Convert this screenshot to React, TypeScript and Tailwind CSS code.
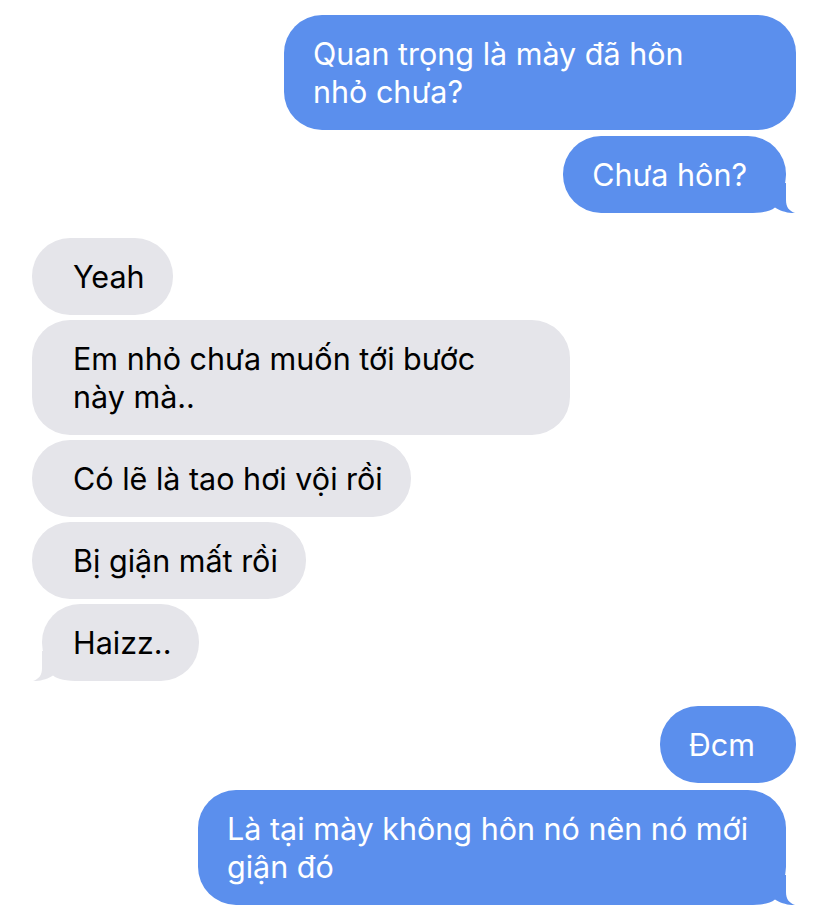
import React from "react";

const BLUE = "bg-[#5b8fed]";
const GRAY = "bg-[#e5e5ea]";

function Tail({ side, color }: { side: "left" | "right"; color: string }) {
  return (
    <svg
      width="48"
      height="30"
      viewBox="0 0 48 30"
      className={
        side === "right"
          ? "absolute bottom-0 right-[-10px]"
          : "absolute bottom-0 left-[-10px] -scale-x-100"
      }
    >
      <path d="M0 0 H38 V17 C38 24 41 28 47 30 C41 30.5 32 28 27 24.5 C22 28.5 14 30 0 30 Z" fill={color} />
    </svg>
  );
}

function Sent({ lines, tail, width }: { lines: string[]; tail?: boolean; width?: string }) {
  return (
    <div
      className={`relative ${BLUE} text-white rounded-[38px] py-[19.5px] pl-[29px] ${tail ? "mr-[10px] pr-[39px]" : "pr-[41px]"} ${width ?? ""}`}
    >
      {lines.map((l, i) => (
        <div key={i} className="relative z-10 whitespace-nowrap">{l}</div>
      ))}
      {tail && <Tail side="right" color="#5b8fed" />}
    </div>
  );
}

function Received({ lines, tail, width }: { lines: string[]; tail?: boolean; width?: string }) {
  return (
    <div
      className={`relative ${GRAY} text-black rounded-[38px] py-[19.5px] pr-[28px] ${tail ? "ml-[10px] pl-[31px]" : "pl-[41px]"} ${width ?? ""}`}
    >
      {lines.map((l, i) => (
        <div key={i} className="relative z-10 whitespace-nowrap">{l}</div>
      ))}
      {tail && <Tail side="left" color="#e5e5ea" />}
    </div>
  );
}

export default function App() {
  return (
    <div
      className="h-[922px] w-[828px] overflow-hidden bg-white text-[30.5px] leading-[38px]"
      style={{ fontFamily: "Inter, 'Noto Sans', sans-serif" }}
    >
      <div className="flex flex-col items-end pr-[32px] pt-[15px] gap-[6px]">
        <Sent lines={["Quan trọng là mày đã hôn", "nhỏ chưa?"]} width="w-[512px]" />
        <Sent lines={["Chưa hôn?"]} tail />
      </div>

      <div className="mt-[25px] flex flex-col items-start pl-[32px] gap-[5px]">
        <Received lines={["Yeah"]} />
        <Received lines={["Em nhỏ chưa muốn tới bước", "này mà.."]} width="w-[538px]" />
        <Received lines={["Có lẽ là tao hơi vội rồi"]} />
        <Received lines={["Bị giận mất rồi"]} />
        <Received lines={["Haizz.."]} tail />
      </div>

      <div className="mt-[25px] flex flex-col items-end pr-[32px] gap-[7px]">
        <Sent lines={["Đcm"]} />
        <Sent lines={["Là tại mày không hôn nó nên nó mới", "giận đó"]} tail width="w-[588px]" />
      </div>
    </div>
  );
}
